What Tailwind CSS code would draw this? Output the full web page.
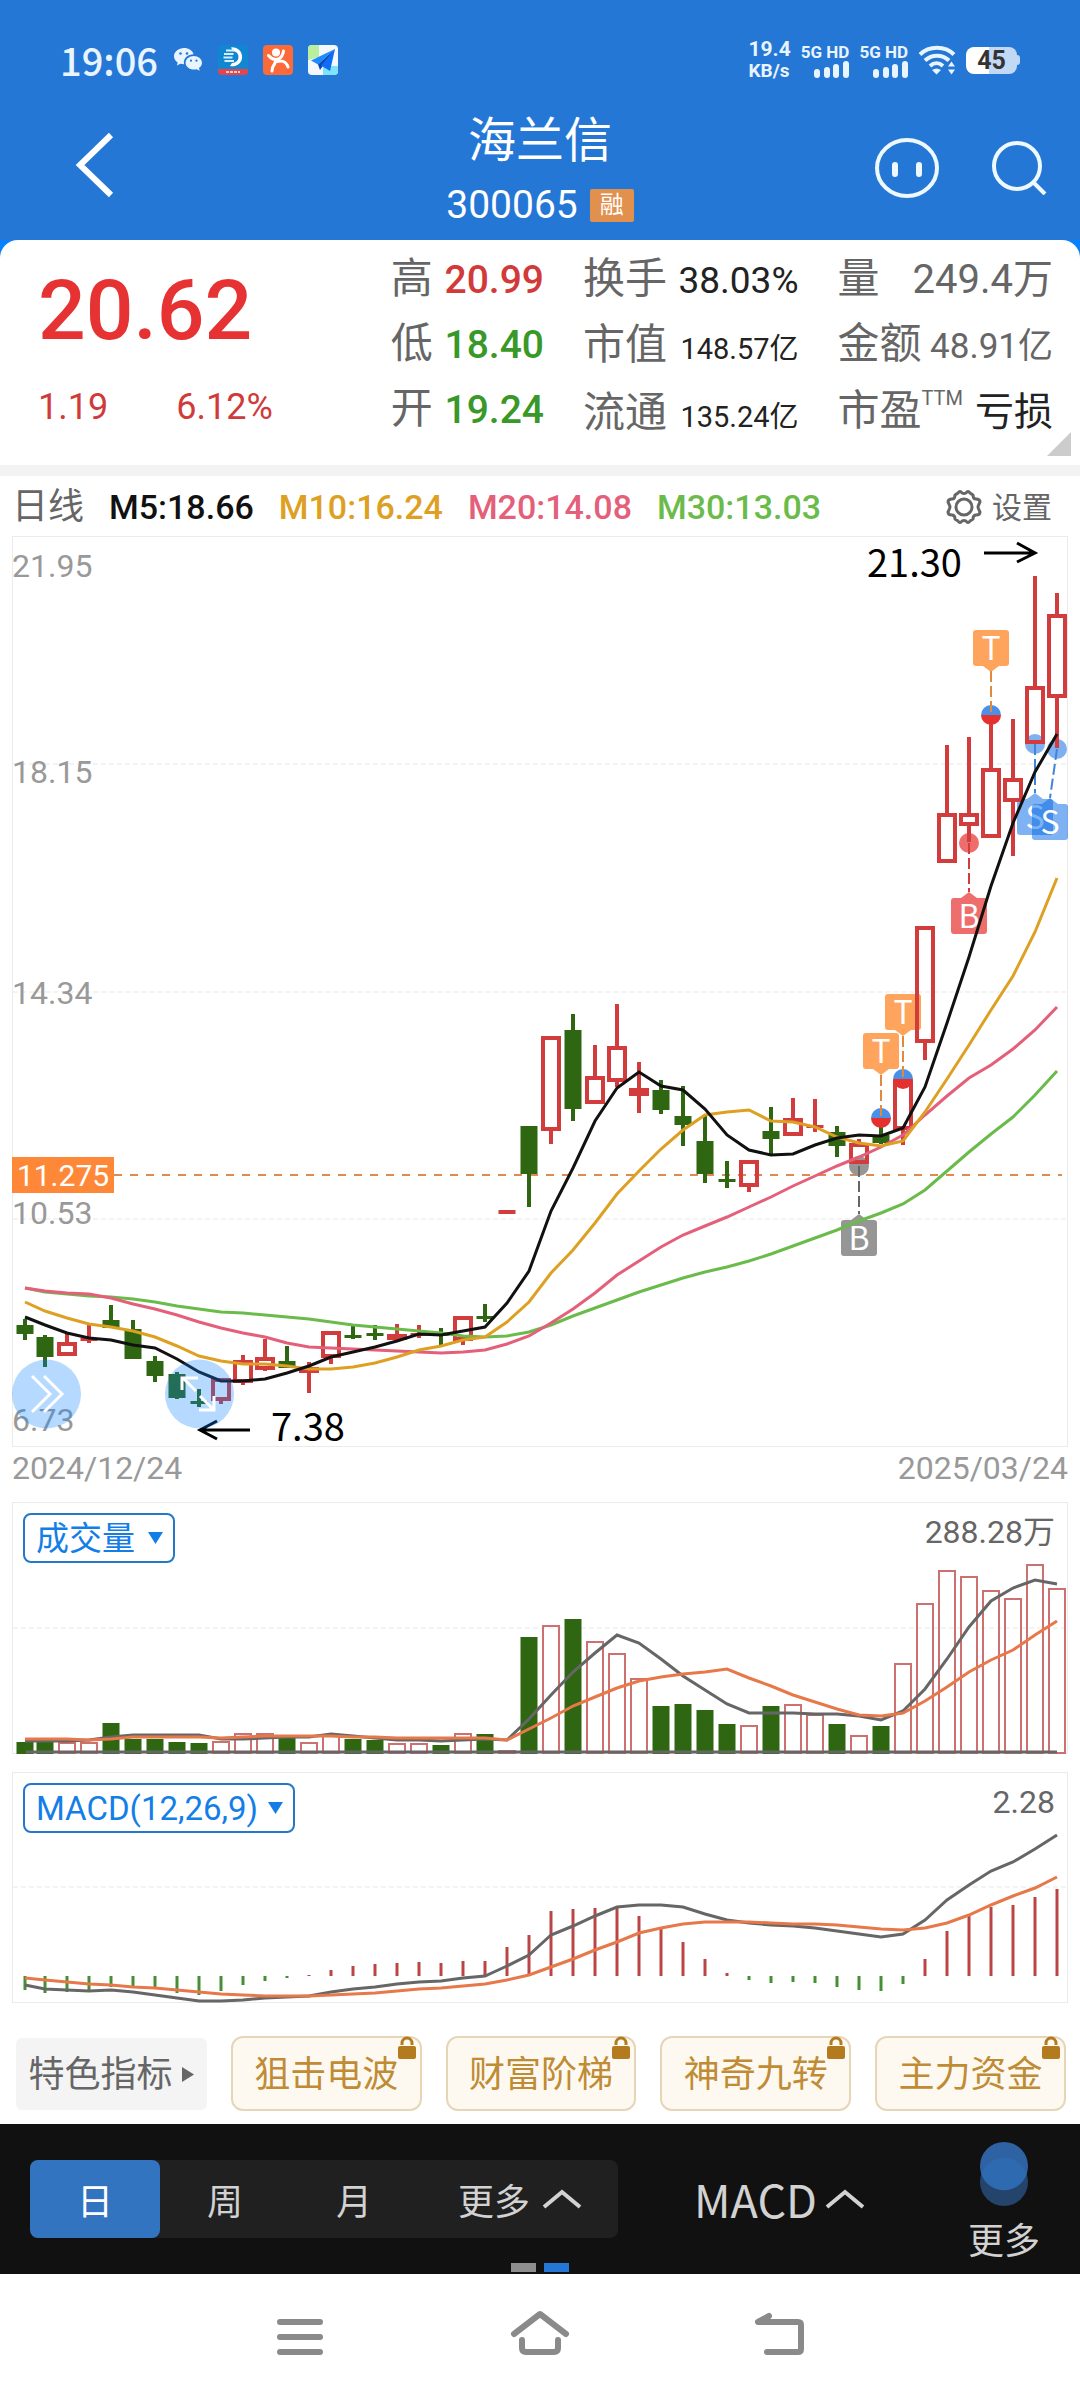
<!DOCTYPE html>
<html lang="zh-CN">
<head>
    <meta charset="UTF-8">
    <meta name="viewport" content="width=device-width, initial-scale=1.0">
    <title>海兰信 300065</title>
    <script src="https://cdn.jsdelivr.net/npm/@tailwindcss/browser@4"></script>
</head>
<body class="bg-white font-[Roboto,'Noto_Sans_CJK_SC',sans-serif] text-[#666]">
    <header class="bg-[#2577d5] text-white">
        <!-- Status bar -->
        <div class="flex h-28 items-center justify-between pt-2 pl-[60px] pr-[60px] text-[#e8f4ff]">
            <div class="flex items-center gap-[15px]">
                <span class="font-['Noto_Sans_CJK_SC',sans-serif] text-[38px] leading-none font-medium">19:06</span>
                <svg class="h-[30px] w-[30px]" viewBox="0 0 30 30">
                    <path fill="#e8f4ff" d="M11 3C5.500 3 1 6.700 1 11.200c0 2.600 1.400 4.800 3.700 6.300L3.800 20.600l3.600-1.800c1.100.3 2.300.5 3.600.5C10 13 15 9.300 20.600 9.300 19.700 5.700 15.700 3 11 3Z"/>
                    <path fill="#e8f4ff" d="M29 17.800c0-3.800-3.700-6.800-8.200-6.800s-8.200 3-8.200 6.800 3.700 6.800 8.200 6.800c1 0 2-.2 2.900-.4l3 1.600-.8-2.700c1.900-1.200 3.100-3.100 3.100-5.300Z"/>
                    <g fill="#2577d5"><circle cx="7.500" cy="8.500" r="1.300"/><circle cx="14" cy="8.500" r="1.300"/><circle cx="18" cy="15.700" r="1.100"/><circle cx="23.500" cy="15.700" r="1.100"/></g>
                </svg>
                <svg class="h-[30px] w-[30px]" viewBox="0 0 30 30">
                    <rect width="30" height="30" rx="4" fill="#1187d2"/>
                    <path d="M0 24h30v2a4 4 0 0 1-4 4H4a4 4 0 0 1-4-4Z" fill="#e2454b"/>
                    <path d="M8 27h14" stroke="#ffc9c4" stroke-width="2" stroke-dasharray="3 1"/>
                    <path d="M13 2.500a9.500 9.500 0 1 1-1 18.500l2-3a6 6 0 1 0 1-12Z" fill="#fff"/>
                    <path d="M8 5.500h8M6 9h9.500M5.500 12.500h9M6.500 16h9.500" stroke="#d4f0ff" stroke-width="2"/>
                </svg>
                <svg class="h-[30px] w-[30px]" viewBox="0 0 30 30">
                    <rect width="30" height="30" rx="4" fill="#fb6a38"/>
                    <circle cx="13" cy="7.500" r="4" fill="#fff"/>
                    <path d="M5.500 10.500c3 3.500 6.500 5 10 3.500 3-1.500 4.500-4 5-8M13.500 14.500c-1 2-1.500 3-2 4.500-1.500 2-2.500 4-2.500 7M14 16.500c5-1.500 9.500.5 11 5.500" fill="none" stroke="#fff" stroke-width="3" stroke-linecap="round"/>
                </svg>
                <svg class="h-[30px] w-[30px]" viewBox="0 0 30 30">
                    <rect width="30" height="30" rx="4" fill="#f4f8fd"/>
                    <path d="M0 4a4 4 0 0 1 4-4h7v12L0 15Z" fill="#b9ef9d"/>
                    <path d="M15 21h15v5a4 4 0 0 1-4 4H15Z" fill="#7fe3fb"/>
                    <path d="M27 4 3 15.500l7 4Z" fill="#1d8bff"/><path d="M27 4 10 19.500l2 5.500Z" fill="#0c46b8"/><path d="M27 4 13 20.500l9 5.500Z" fill="#0f6cf5"/>
                </svg>
            </div>
            <div class="flex items-center gap-[10px] font-bold">
                <div class="text-[21px] leading-[21px]"><p>19.4</p><p class="text-[19px]">KB/s</p></div>
                <div class="flex flex-col items-end text-[17px] leading-[18px]">
                    <p>5G HD</p>
                    <svg class="h-[17px] w-[35px]" viewBox="0 0 35 17" stroke="#e8f4ff" stroke-width="6" stroke-linecap="round"><path d="M3 11v3M13 9v5M22 6v8M32 3v11"/></svg>
                </div>
                <div class="flex flex-col items-end text-[17px] leading-[18px]">
                    <p>5G HD</p>
                    <svg class="h-[17px] w-[35px]" viewBox="0 0 35 17" stroke="#e8f4ff" stroke-width="6" stroke-linecap="round"><path d="M3 11v3M13 9v5M22 6v8M32 3v11"/></svg>
                </div>
                <svg class="h-[30px] w-[38px]" viewBox="0 0 38 30" fill="none" stroke="#e8f4ff" stroke-width="4">
                    <path d="M2 9.500C11 .5 27 .5 36 9.500M7 15.500c7-6.500 17-6.500 24 0M12 21c4-3.700 9-3.700 13 0"/>
                    <path d="M14 25l4.500 4.500L23 25c-3-2-6-2-9 0Z" fill="#e8f4ff" stroke="none"/>
                    <path d="m33.500 16.500 3.500 5h-7zM33.500 29.500l3.500-5h-7z" fill="#e8f4ff" stroke="none"/>
                </svg>
                <div class="flex items-center">
                    <div class="h-[27px] w-[51px] rounded-lg bg-linear-to-r from-white from-45% to-[#c1d9f5] to-45% text-center text-[25px] leading-[28px] text-[#333]">45</div>
                    <div class="h-[10px] w-[3px] rounded-r bg-[#c1d9f5]"></div>
                </div>
            </div>
        </div>
        <!-- Title bar -->
        <div class="grid grid-cols-[1fr_auto_1fr] items-start">
            <button type="button" aria-label="返回" class="flex h-[106px] items-center pl-[74px]">
                <svg class="h-[68px] w-[40px]" viewBox="0 0 40 68"><path d="M37 4 6 34l31 30" fill="none" stroke="#fff" stroke-width="6"/></svg>
            </button>
            <div class="text-center">
                <h1 class="text-[48px] leading-[58px]">海兰信</h1>
                <p class="flex h-[70px] items-center gap-[12px] text-[39px]">300065<span class="rounded-xs bg-[#e2904e] px-[10px] text-[24px] leading-[33px]">融</span></p>
            </div>
            <div class="flex h-[110px] items-center justify-end gap-[50px] pr-[33px]">
                <button type="button" aria-label="助手">
                    <svg class="h-[64px] w-[68px]" viewBox="0 0 68 64" fill="none" stroke="#eef8ff" stroke-width="4"><ellipse cx="34" cy="33" rx="30" ry="28"/><path d="M22 30v9M46 30v9" stroke-width="6" stroke-linecap="round"/></svg>
                </button>
                <button type="button" aria-label="搜索">
                    <svg class="h-[56px] w-[56px]" viewBox="0 0 56 56" fill="none" stroke="#eef8ff" stroke-width="4"><circle cx="26" cy="27" r="23"/><path d="m42 43 12 12"/></svg>
                </button>
            </div>
        </div>
    </header>

    <!-- Quote summary -->
    <div class="bg-[#0a80ff]">
        <section class="relative grid h-[225px] grid-cols-[313fr_153fr_215fr_215fr] gap-x-[39px] rounded-t-[18px] bg-white pt-[7px] pr-[27px] pl-[38px] text-[42px] leading-[64px]">
            <div class="text-[#e63232]">
                <p class="h-[128px] text-[84px] leading-[128px] font-medium">20.62</p>
                <p class="flex gap-[68px] text-[36px] text-[#cf3b3b]"><span>1.19</span><span>6.12%</span></p>
            </div>
            <dl>
                <div class="flex items-baseline justify-between"><dt>高</dt><dd class="text-[39px] font-medium text-[#d23a3a]">20.99</dd></div>
                <div class="flex items-baseline justify-between"><dt>低</dt><dd class="text-[39px] font-medium text-[#389828]">18.40</dd></div>
                <div class="flex items-baseline justify-between"><dt>开</dt><dd class="text-[39px] font-medium text-[#389828]">19.24</dd></div>
            </dl>
            <dl>
                <div class="flex items-baseline justify-between"><dt>换手</dt><dd class="text-[37px] text-[#222]">38.03%</dd></div>
                <div class="flex items-baseline justify-between"><dt>市值</dt><dd class="text-[29px] text-[#222]">148.57亿</dd></div>
                <div class="flex items-baseline justify-between"><dt>流通</dt><dd class="text-[29px] text-[#222]">135.24亿</dd></div>
            </dl>
            <dl>
                <div class="flex items-baseline justify-between"><dt>量</dt><dd class="text-[40px]">249.4万</dd></div>
                <div class="flex items-baseline justify-between"><dt>金额</dt><dd class="text-[35px]">48.91亿</dd></div>
                <div class="flex items-baseline justify-between"><dt class="flex">市盈<span class="text-[20px] leading-[38px]">TTM</span></dt><dd class="text-[39px] text-[#222]">亏损</dd></div>
            </dl>
            <svg class="absolute right-[9px] bottom-[9px] h-6 w-6" viewBox="0 0 24 24"><path d="M24 0v24H0z" fill="#ccc"/></svg>
        </section>
    </div>

    <main class="border-t-[11px] border-[#f3f3f3]">
        <!-- Moving averages -->
        <div class="flex h-[60px] items-center gap-[25px] pt-[2px] pr-[28px] pl-[12px] text-[34px] font-medium">
            <span class="text-[36px] font-normal">日线</span>
            <span class="text-[#111]">M5:18.66</span>
            <span class="text-[#dea022]">M10:16.24</span>
            <span class="text-[#e4607a]">M20:14.08</span>
            <span class="text-[#6bbb4b]">M30:13.03</span>
            <button type="button" class="ml-auto flex items-center gap-[10px] text-[30px] font-normal">
                <svg class="h-[36px] w-[36px]" viewBox="0 0 36 36" fill="none" stroke="#666" stroke-width="3" stroke-linejoin="round">
                    <path d="M12 4q2-3 4 0 2 1 4 0 2-3 4 0l3 2 q0 4 3 4 4 0 4 3-2 4-2 5t2 5q0 3-4 3-3 0-3 4l-3 2q-2 3-4 0-2-1-4 0-2 3-4 0l-3-2q0-4-3-4-4 0-4-3 2-4 2-5t-2-5q0-3 4-3 3 0 3-4z"/>
                    <circle cx="18" cy="18" r="8"/>
                </svg>
                设置
            </button>
        </div>

        <!-- K-line -->
        <section class="mx-3">
            <svg id="kline" class="block w-full overflow-visible" viewBox="12 536 1056 911"></svg>
            <div class="mb-[13px] flex justify-between text-[32px] leading-[42px] text-[#999]"><time>2024/12/24</time><time>2025/03/24</time></div>
        </section>

        <!-- Volume -->
        <section class="relative mx-3">
            <svg id="volume" class="block w-full" viewBox="12 1502 1056 252"></svg>
            <label class="absolute top-[11px] left-[11px] block text-[#147ee8]">
                <select aria-label="副图指标一" class="block h-[50px] w-[152px] appearance-none rounded-lg border-2 border-[#2378c8] pt-[2px] pl-[11px] text-[33px] leading-[44px]"><option>成交量</option></select>
                <svg class="pointer-events-none absolute top-[19px] right-[12px] h-[12px] w-[15px]" viewBox="0 0 15 12"><path d="M0 0h15L7.500 12z" fill="currentColor"/></svg>
            </label>
            <p class="absolute top-[8px] right-[13px] text-[32px] leading-[44px]">288.28万</p>
        </section>

        <!-- MACD -->
        <section class="relative mx-3 mt-[18px]">
            <svg id="macd" class="block w-full" viewBox="12 1772 1056 231"></svg>
            <label class="absolute top-[11px] left-[11px] block text-[#147ee8]">
                <select aria-label="副图指标二" class="block h-[50px] w-[272px] appearance-none rounded-lg border-2 border-[#2378c8] pt-[2px] pl-[11px] text-[33px] leading-[44px]"><option>MACD(12,26,9)</option></select>
                <svg class="pointer-events-none absolute top-[19px] right-[12px] h-[12px] w-[15px]" viewBox="0 0 15 12"><path d="M0 0h15L7.500 12z" fill="currentColor"/></svg>
            </label>
            <p class="absolute top-[8px] right-[13px] text-[32px] leading-[44px]">2.28</p>
        </section>

        <!-- Featured indicators -->
        <div class="mt-[33px] mb-[13px] grid grid-cols-5 items-center gap-[24px] pr-[14px] pl-[16px] text-[36px] text-[#bf8c35]">
            <button type="button" class="flex h-[72px] items-center justify-center gap-[10px] rounded-md bg-[#f4f4f4] pt-[2px] whitespace-nowrap text-[#666]">特色指标<svg class="h-[15px] w-[12px]" viewBox="0 0 12 15"><path d="M0 0v15l12-7.500z" fill="#666"/></svg></button>
            <button type="button" class="relative h-[75px] rounded-xl border-2 border-[#e6d6b8] bg-[#fdf9f0] pt-[2px] whitespace-nowrap">狙击电波<svg class="absolute -top-[2px] right-[4px] h-[24px] w-[18px]" viewBox="0 0 18 24"><rect y="10" width="18" height="13" rx="2" fill="#b37a1e"/><path d="M4 9V7a5 5 0 0 1 10 0v2" fill="none" stroke="#b37a1e" stroke-width="3"/></svg></button>
            <button type="button" class="relative h-[75px] rounded-xl border-2 border-[#e6d6b8] bg-[#fdf9f0] pt-[2px] whitespace-nowrap">财富阶梯<svg class="absolute -top-[2px] right-[4px] h-[24px] w-[18px]" viewBox="0 0 18 24"><rect y="10" width="18" height="13" rx="2" fill="#b37a1e"/><path d="M4 9V7a5 5 0 0 1 10 0v2" fill="none" stroke="#b37a1e" stroke-width="3"/></svg></button>
            <button type="button" class="relative h-[75px] rounded-xl border-2 border-[#e6d6b8] bg-[#fdf9f0] pt-[2px] whitespace-nowrap">神奇九转<svg class="absolute -top-[2px] right-[4px] h-[24px] w-[18px]" viewBox="0 0 18 24"><rect y="10" width="18" height="13" rx="2" fill="#b37a1e"/><path d="M4 9V7a5 5 0 0 1 10 0v2" fill="none" stroke="#b37a1e" stroke-width="3"/></svg></button>
            <button type="button" class="relative h-[75px] rounded-xl border-2 border-[#e6d6b8] bg-[#fdf9f0] pt-[2px] whitespace-nowrap">主力资金<svg class="absolute -top-[2px] right-[4px] h-[24px] w-[18px]" viewBox="0 0 18 24"><rect y="10" width="18" height="13" rx="2" fill="#b37a1e"/><path d="M4 9V7a5 5 0 0 1 10 0v2" fill="none" stroke="#b37a1e" stroke-width="3"/></svg></button>
        </div>
    </main>

    <!-- Period toolbar -->
    <div class="relative flex h-[150px] items-center bg-[#111] pr-[40px] pl-[30px] font-['Noto_Sans_CJK_SC',sans-serif] text-[36px] text-[#d2d2d2]">
        <div class="grid h-[78px] w-[588px] grid-cols-[130fr_130fr_128fr_200fr] rounded-lg bg-[#202020]">
            <button type="button" class="rounded-lg bg-[#3274c0] text-white">日</button>
            <button type="button">周</button>
            <button type="button">月</button>
            <button type="button" class="flex items-center justify-center gap-[12px] pl-1">更多<svg class="h-[20px] w-[40px]" viewBox="0 0 40 20"><path d="M2 18 20 3l18 15" fill="none" stroke="currentColor" stroke-width="4"/></svg></button>
        </div>
        <button type="button" class="ml-[76px] flex items-center gap-[8px] text-[45px]">MACD<svg class="h-[20px] w-[40px]" viewBox="0 0 40 20"><path d="M2 18 20 3l18 15" fill="none" stroke="currentColor" stroke-width="4"/></svg></button>
        <button type="button" class="ml-auto flex flex-col items-center pt-[6px] leading-[48px]">
            <svg class="h-[64px] w-[48px]" viewBox="0 0 48 64"><circle cx="24" cy="40" r="24" fill="#24446c"/><circle cx="24" cy="24" r="24" fill="#2e62a2"/><path d="M1.300 32a24 24 0 0 1 45.400 0 24 24 0 0 1-45.400 0Z" fill="#2e6ab0"/></svg>
            <span class="pt-2">更多</span>
        </button>
        <div class="absolute inset-x-0 bottom-[2px] flex justify-center gap-[8px]"><i class="h-[9px] w-[25px] bg-[#8e8e8e]"></i><i class="h-[9px] w-[25px] bg-[#2577d5]"></i></div>
    </div>

    <!-- System navigation -->
    <nav class="flex h-[126px] items-center justify-center gap-[180px] bg-white">
        <button type="button" aria-label="最近任务"><svg class="h-[60px] w-[60px]" viewBox="0 0 60 60" stroke="#8a8a8a" stroke-width="6" stroke-linecap="round"><path d="M10 15h40M10 30h40M10 45h40"/></svg></button>
        <button type="button" aria-label="主页"><svg class="h-[60px] w-[60px]" viewBox="0 0 60 60" fill="none" stroke="#8a8a8a" stroke-width="6" stroke-linecap="round" stroke-linejoin="round"><path d="M4 27 30 7l26 20M12 33v8q0 4 4 4h28q4 0 4-4v-8"/></svg></button>
        <button type="button" aria-label="返回上一页"><svg class="h-[60px] w-[60px]" viewBox="0 0 60 60" fill="none" stroke="#8a8a8a" stroke-width="6" stroke-linecap="round" stroke-linejoin="round"><path d="M19 9 8 15h40q3 0 3 3v24q0 3-3 3H17"/></svg></button>
    </nav>

    <script>
        const RED = '#d23c3c', GREEN = '#2f6612';

        // [up, high, body top, body bottom, low]
        const candles = [
            [0,1319,1325,1334,1340],[0,1335,1337,1357,1367],[1,1334,1342,1356,1356],[1,1325,1338,1340,1343],
            [0,1305,1320,1328,1328],[0,1320,1329,1359,1359],[0,1356,1361,1376,1382],[0,1372,1374,1398,1399],
            [0,1389,1401,1403,1407],[1,1378,1378,1401,1404],[1,1355,1360,1383,1385],[1,1339,1357,1370,1371],
            [0,1346,1361,1368,1368],[1,1362,1367,1373,1393],[1,1331,1331,1358,1364],[0,1326,1335,1337,1339],
            [0,1325,1333,1335,1340],[1,1324,1334,1340,1340],[1,1325,1333,1335,1338],[0,1328,1333,1335,1345],
            [1,1316,1316,1341,1345],[0,1304,1316,1318,1322],[1,1210,1210,1214,1214],[0,1126,1126,1174,1207],
            [1,1036,1036,1131,1144],[0,1014,1030,1109,1121],[1,1045,1076,1104,1104],[1,1004,1046,1082,1087],
            [1,1062,1088,1096,1113],[0,1080,1090,1110,1114],[0,1086,1116,1125,1146],[0,1115,1141,1174,1183],
            [0,1161,1179,1181,1188],[1,1160,1160,1187,1192],[0,1107,1131,1139,1155],[1,1098,1118,1136,1136],
            [1,1099,1125,1127,1132],[0,1126,1132,1146,1157],[1,1139,1143,1164,1164],[0,1118,1135,1143,1144],
            [1,1080,1080,1130,1145],[1,926,926,1043,1060],[1,745,813,863,863],[1,737,813,826,842],
            [1,718,768,838,838],[1,719,778,802,856],[1,576,686,744,744],[1,593,614,698,748]
        ];
        const ma = {
            '#6bbb4b': [1288,1292,1294,1296,1297,1299,1302,1306,1309,1312,1313,1315,1317,1319,1322,1325,1327,1329,1331,1333,1336,1337,1336,1332,1325,1316,1308,1300,1292,1285,1278,1272,1267,1261,1254,1246,1238,1230,1221,1213,1204,1190,1171,1152,1134,1117,1095,1071],
            '#e4607a': [1288,1291,1293,1294,1298,1304,1309,1315,1322,1328,1333,1337,1343,1347,1348,1349,1350,1351,1352,1353,1352,1350,1344,1336,1323,1309,1293,1275,1261,1247,1235,1226,1217,1207,1197,1186,1176,1166,1157,1147,1135,1115,1096,1078,1065,1049,1030,1007],
            '#dea022': [1302,1311,1318,1324,1327,1331,1337,1346,1356,1361,1364,1364,1366,1369,1369,1367,1363,1357,1350,1346,1340,1337,1322,1302,1273,1250,1223,1194,1171,1149,1130,1115,1112,1110,1121,1122,1127,1137,1143,1146,1141,1112,1079,1045,1010,976,932,878],
            '#111': [1317,1325,1333,1338,1340,1345,1348,1359,1372,1381,1381,1379,1373,1366,1357,1352,1347,1341,1334,1335,1331,1327,1303,1271,1211,1168,1121,1088,1072,1086,1090,1109,1135,1150,1155,1154,1145,1138,1135,1136,1128,1087,1023,957,886,823,772,734]
        };
        const volTop = [1742,1742,1742,1742,1723,1739,1739,1742,1743,1741,1733,1733,1738,1742,1734,1739,1740,1743,1743,1745,1733,1734,1750,1637,1625,1619,1641,1653,1678,1706,1704,1710,1724,1725,1706,1704,1714,1724,1735,1726,1663,1603,1570,1576,1590,1598,1564,1588];
        const vol5 = [1741,1741,1741,1740,1737,1735,1735,1735,1735,1739,1739,1738,1737,1737,1734,1736,1738,1740,1740,1741,1740,1739,1740,1719,1695,1672,1653,1635,1643,1659,1676,1690,1704,1713,1713,1713,1714,1714,1716,1720,1711,1689,1659,1627,1601,1588,1580,1584];
        const vol10 = [1739,1739,1739,1740,1739,1737,1737,1737,1737,1738,1737,1736,1736,1736,1736,1737,1737,1738,1738,1738,1738,1738,1740,1729,1718,1706,1697,1688,1681,1677,1674,1672,1669,1678,1686,1695,1702,1709,1715,1716,1713,1701,1687,1672,1660,1650,1635,1621];
        const hist = [1990,1993,1992,1990,1987,1986,1989,1993,1995,1991,1985,1981,1978,1975,1970,1966,1964,1963,1962,1963,1961,1961,1947,1935,1911,1909,1908,1907,1916,1928,1942,1959,1973,1980,1983,1982,1983,1987,1990,1991,1984,1959,1931,1916,1907,1905,1897,1889];
        const dif = [1985,1989,1990,1991,1990,1992,1995,1998,2001,2001,2000,1998,1997,1996,1992,1989,1987,1984,1982,1981,1978,1976,1966,1955,1935,1926,1916,1907,1905,1905,1907,1914,1920,1923,1925,1926,1928,1931,1934,1937,1934,1920,1900,1885,1871,1862,1849,1835];
        const dea = [1978,1980,1982,1984,1985,1987,1988,1990,1992,1994,1995,1996,1996,1996,1995,1994,1993,1991,1989,1988,1986,1984,1980,1975,1967,1959,1950,1942,1933,1928,1924,1922,1922,1922,1923,1924,1924,1925,1927,1929,1930,1928,1923,1915,1905,1896,1888,1877];

        const x = i => i === 0 ? 25 : 23 + 22 * i;
        const poly = (data, color) => `<polyline points="${data.map((y, i) => x(i) + ',' + y).join(' ')}" fill="none" stroke="${color}" stroke-width="3"/>`;
        const frame = (top, bottom) => `<rect x="12.5" y="${top + .5}" width="1055" height="${bottom - top - 1}" fill="none" stroke="#ebebeb"/>`;
        const grid = y => `<path d="M13 ${y}H1066" stroke="#f3f3f3" stroke-width="2" stroke-dasharray="5 3"/>`;

        function candle([up, high, top, bottom, low], i) {
            const c = up ? RED : GREEN, cx = x(i);
            let s = `<path d="M${cx} ${high}V${top}M${cx} ${bottom}V${low}" stroke="${c}" stroke-width="4"/>`;
            if (up && bottom - top > 5) {
                const fill = i === 17 || i === 28 ? '#f44' : 'none';
                s += `<rect x="${cx - 8}" y="${top + 2}" width="16" height="${bottom - top - 4}" fill="${fill}" stroke="${c}" stroke-width="4"/>`;
            } else {
                s += `<rect x="${cx - 8.5}" y="${top}" width="17" height="${Math.max(3, bottom - top)}" fill="${c}"/>`;
            }
            return s;
        }

        // Trade tag: box with a small tip pointing at its candle
        function tag(letter, cx, top, color, opacity, tipUp) {
            const tip = tipUp ? `M${cx - 8} ${top}l8-6 8 6z` : `M${cx - 8} ${top + 36}l8 6 8-6z`;
            return `<g fill="${color}" fill-opacity="${opacity}"><rect x="${cx - 18}" y="${top}" width="36" height="36" rx="3"/><path d="${tip}"/></g>
                <text x="${cx}" y="${top + 30}" text-anchor="middle" class="fill-white font-['Noto_Sans_CJK_SC',sans-serif] text-[32px]">${letter}</text>`;
        }
        const dash = (x1, y1, x2, y2, color) => `<path d="M${x1} ${y1}L${x2} ${y2}" stroke="${color}" stroke-width="2" stroke-dasharray="11 4"/>`;
        const dot = (cx, cy, color) => `<circle cx="${cx}" cy="${cy}" r="10" fill="${color}"/>`;
        const splitDot = (cx, cy) => `<path d="M${cx - 10} ${cy}a10 10 0 0 1 20 0z" fill="#4a90e6"/><path d="M${cx - 10} ${cy}a10 10 0 0 0 20 0z" fill="#e63030"/>`;

        function drawKline() {
            let s = frame(536, 1447) + grid(764) + grid(992) + grid(1219);
            s += '<path d="M114 1175H1062" stroke="#e08a50" stroke-width="2" stroke-dasharray="8 8"/>';
            [['21.95', 577], ['18.15', 783], ['14.34', 1004], ['10.53', 1224], ['6.73', 1431]].forEach(([t, y]) => {
                s += `<text x="12" y="${y}" class="fill-[#999] text-[32px]">${t}</text>`;
            });
            s += '<rect x="12" y="1157" width="102" height="36" fill="#ff8838"/><text x="63" y="1186" text-anchor="middle" class="fill-white text-[30px]">11.275</text>';

            s += dot(969, 843, '#ee6e6e') + dot(859, 1166, '#969696') + dot(1035, 744, '#7fb1f1') + dot(1057, 749, '#7fb1f1');
            s += tag('T', 991, 630, '#ffa45c', 1, false) + tag('T', 903, 994, '#ffa45c', 1, false) + tag('T', 881, 1033, '#ffa45c', 1, false);
            s += tag('B', 969, 898, '#ee6e6e', 1, true) + tag('B', 859, 1220, '#969696', 1, true);
            s += tag('S', 1035, 799, '#0a6ce6', .52, true) + tag('S', 1050, 804, '#0a6ce6', .52, true);
            s += candles.map(candle).join('');
            s += splitDot(991, 715) + splitDot(903, 1079) + splitDot(881, 1118);
            s += dash(991, 671, 991, 713, '#e08a40') + dash(903, 1036, 903, 1077, '#e08a40') + dash(881, 1075, 881, 1117, '#e08a40');
            s += dash(969, 843, 969, 892, RED) + dash(859, 1166, 859, 1214, '#666') + dash(1035, 744, 1035, 793, '#3f86d8') + dash(1057, 749, 1050, 798, '#3f86d8');
            for (const color in ma) s += poly(ma[color], color);

            // Highest and lowest price
            s += `<g class="fill-black font-['Noto_Sans_CJK_SC',sans-serif] text-[38px]"><text x="867" y="577">21.30</text><text x="271" y="1441">7.38</text></g>`;
            s += '<path d="M984 553h51m-18-10 18 10-18 9M250 1430h-50m17-9-17 9 17 9" fill="none" stroke="#000" stroke-width="3"/>';

            // Floating expand / fullscreen controls
            s += '<g fill="#0a80ff" fill-opacity=".3"><circle cx="46.500" cy="1394" r="34.500"/><circle cx="199.500" cy="1394" r="34.500"/></g>';
            s += '<path d="m32 1376 18 18-18 18M44 1376l18 18-18 18M182 1390v-12h16M183 1378l13 13M199 1410h15v-14M213 1409l-13-13" fill="none" stroke="#fff" stroke-width="3"/>';
            document.getElementById('kline').innerHTML = s;
        }

        function drawVolume() {
            let s = frame(1502, 1754) + grid(1628);
            volTop.forEach((y, i) => {
                s += candles[i][0]
                    ? `<rect x="${x(i) - 8}" y="${y + 1}" width="16" height="${1753 - y - 1}" fill="none" stroke="#cc7070" stroke-width="2"/>`
                    : `<rect x="${x(i) - 8.5}" y="${y}" width="17" height="${1754 - y}" fill="${GREEN}"/>`;
            });
            s += '<path d="M26 1752H1057" stroke="#666" stroke-width="3"/>';
            s += poly(vol5, '#666') + poly(vol10, '#e6784a');
            document.getElementById('volume').innerHTML = s;
        }

        function drawMacd() {
            let s = frame(1772, 2003) + grid(1887);
            hist.forEach((y, i) => {
                s += `<path d="M${x(i)} 1976V${y}" stroke="${y > 1976 ? '#459035' : '#bb4444'}" stroke-width="3"/>`;
            });
            s += poly(dif, '#666') + poly(dea, '#e6784a');
            document.getElementById('macd').innerHTML = s;
        }

        drawKline();
        drawVolume();
        drawMacd();
    </script>
</body>
</html>
